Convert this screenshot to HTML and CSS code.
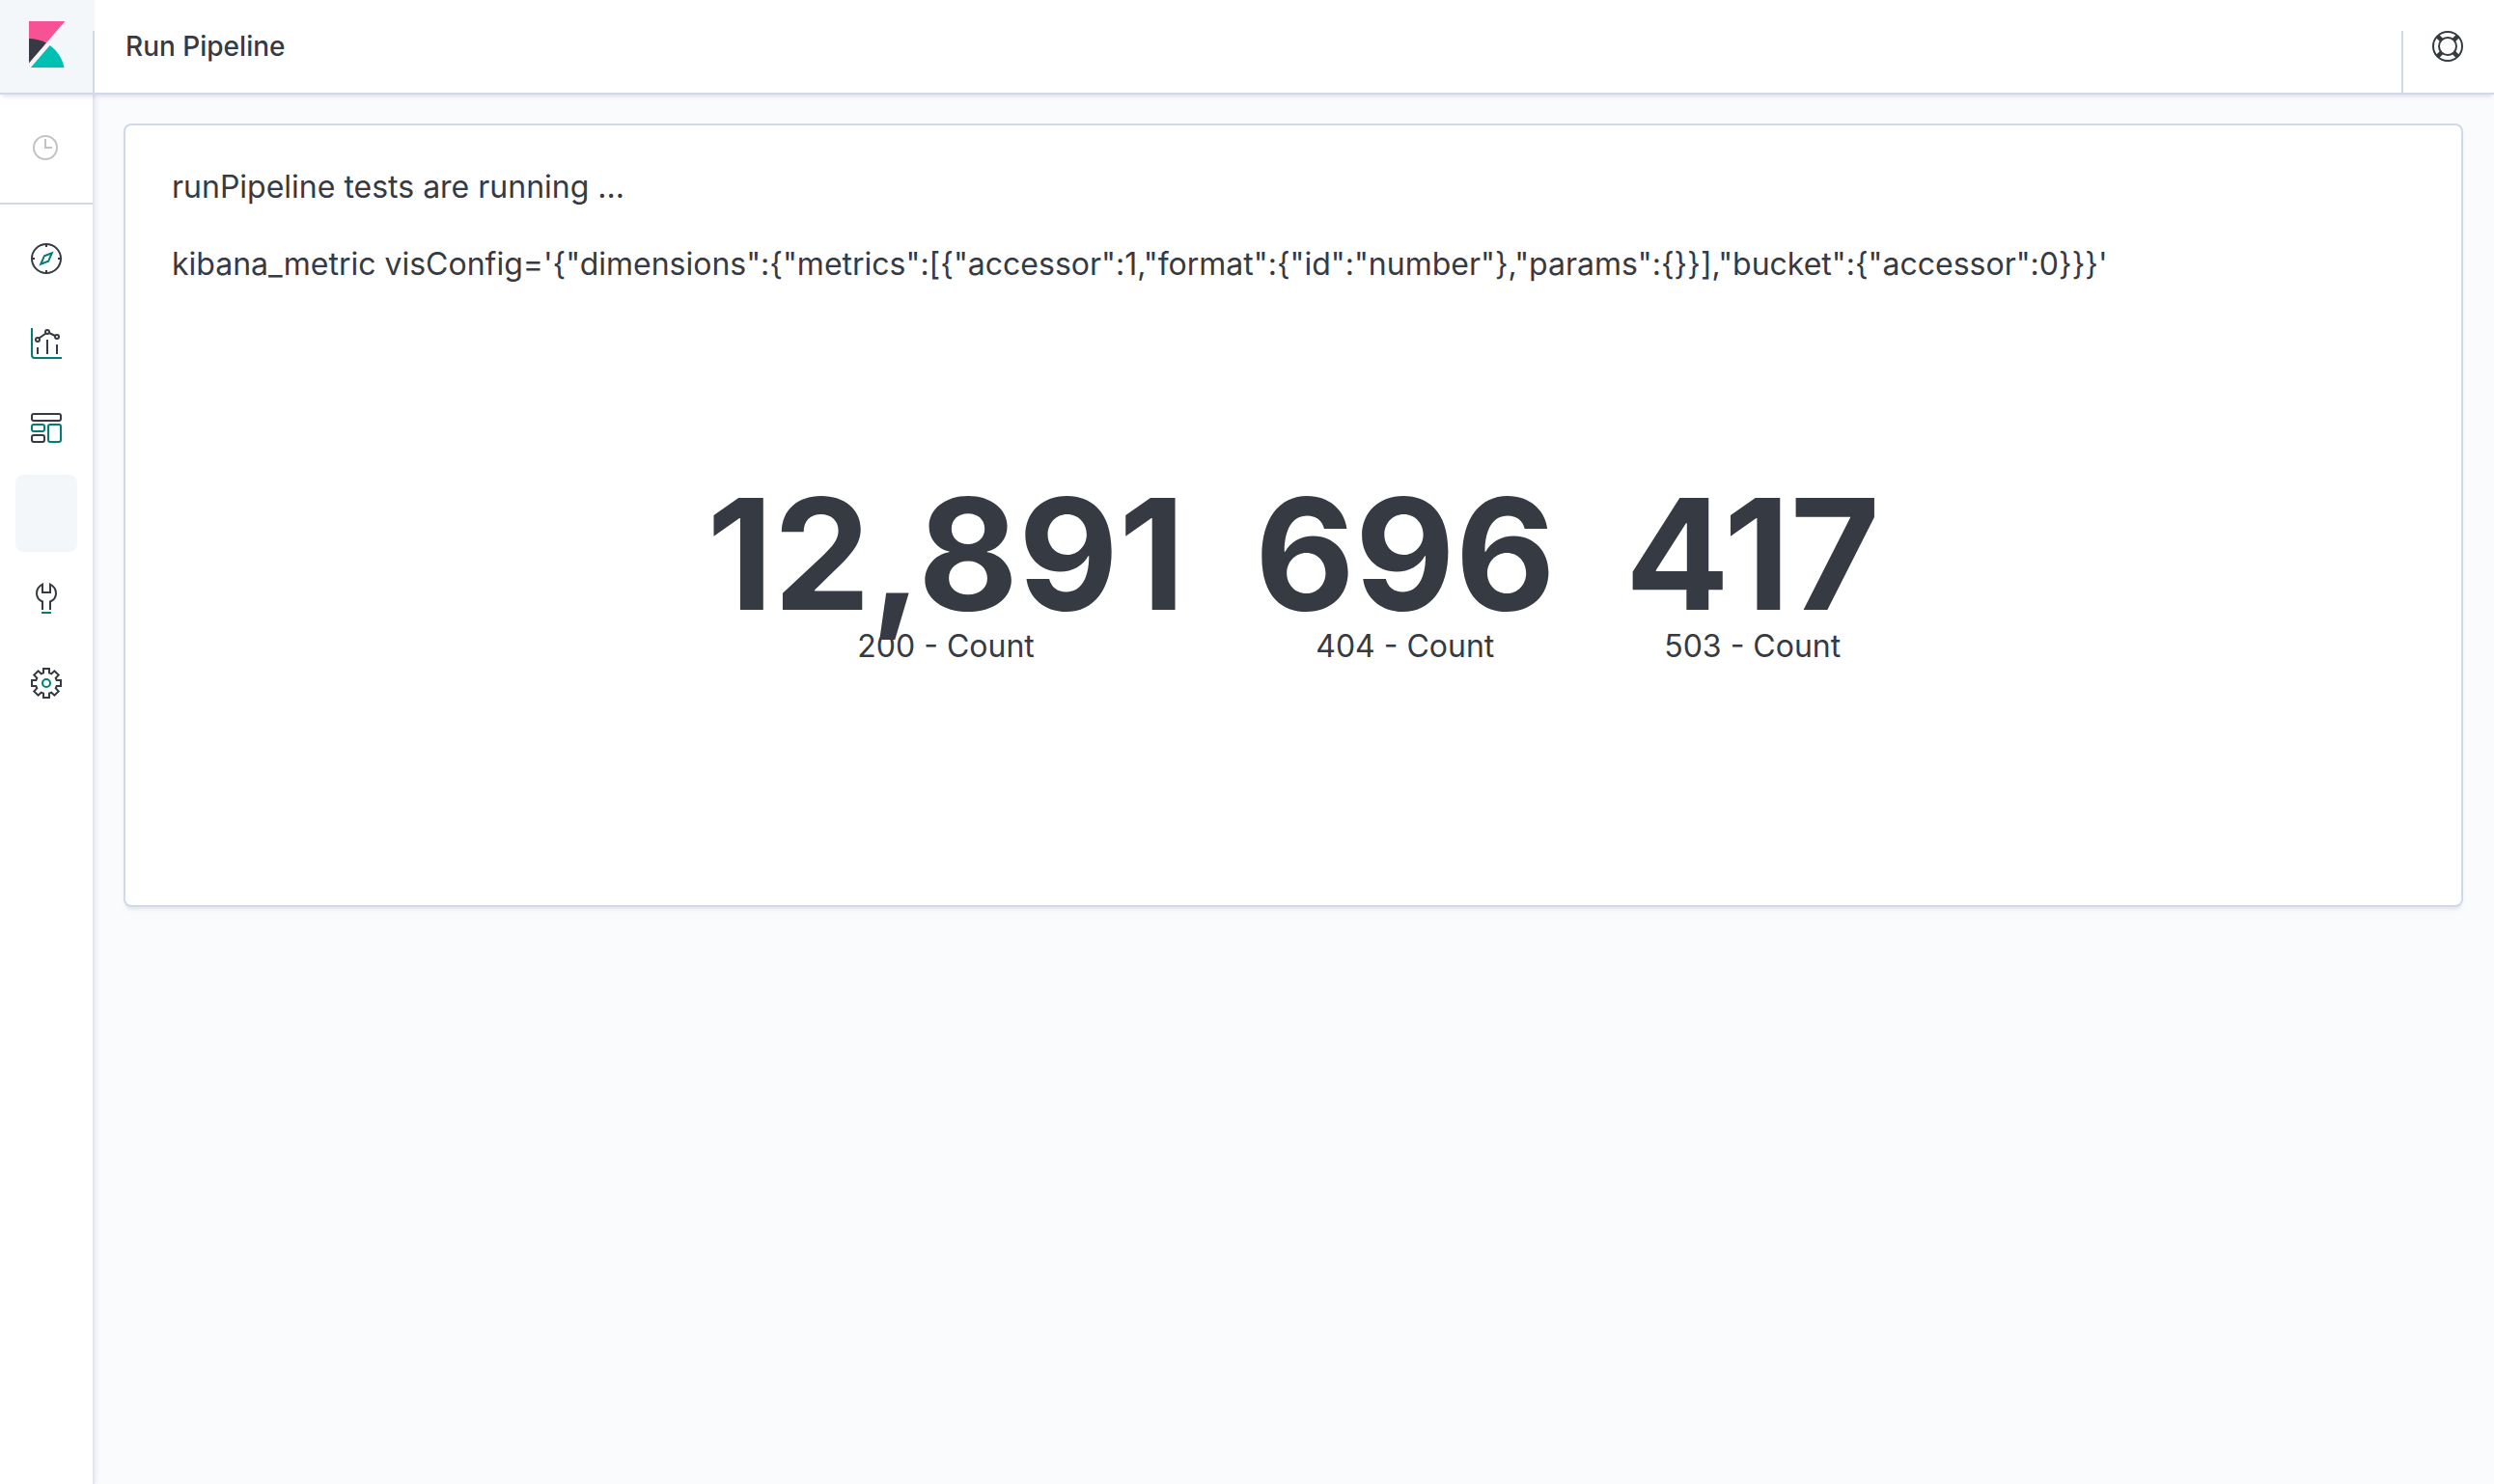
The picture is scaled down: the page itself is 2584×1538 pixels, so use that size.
FILE: index.html
```html
<!DOCTYPE html>
<html lang="en">
<head>
<meta charset="utf-8">
<title>Run Pipeline - Kibana</title>
<link rel="stylesheet" href="styles.css">
</head>
<body>
<div class="app">
  <header class="header">
    <a class="header-logo" href="#" aria-label="Kibana home">
      <svg width="48" height="48" viewBox="0 0 32 32" aria-hidden="true">
        <path fill="#f85296" d="M4 0v28.789L28.935.017z"/>
        <path fill="#363a43" d="M4 12v16.789l11.906-13.738A24.721 24.721 0 0 0 4 12"/>
        <path fill="#00bfb3" d="M18.479 16.664 6.268 30.754l-1.073 1.237h23.191c-1.252-6.292-4.883-11.719-9.908-15.327"/>
      </svg>
    </a>
    <span class="header-rule"></span>
    <h1 class="header-title">Run Pipeline</h1>
    <span class="header-rule header-rule-end"></span>
    <button class="header-help" type="button" aria-label="Help menu">
      <svg width="32" height="32" viewBox="0 0 32 32" fill="none" stroke="#363a43" stroke-width="2" aria-hidden="true">
        <circle cx="16" cy="16" r="15"/>
        <circle cx="16" cy="16" r="9"/>
        <path stroke-width="4.5" d="m5.700 5.700 4 4M26.300 5.700l-4 4M5.700 26.300l4-4M26.300 26.300l-4-4"/>
      </svg>
    </button>
  </header>

  <nav class="sidebar" aria-label="Main">
    <div class="recent">
      <button class="recent-button" type="button" aria-label="Recently viewed" disabled>
        <svg width="26" height="26" viewBox="0 0 26 26" fill="none" stroke="#c2c3c6" stroke-width="2" aria-hidden="true">
          <circle cx="13" cy="13" r="12"/>
          <path d="M13 4v9h7"/>
        </svg>
      </button>
    </div>
    <ul class="nav-list">
      <li><a class="nav-link" href="#" aria-label="Discover">
        <svg width="32" height="32" viewBox="0 0 32 32" fill="none" stroke="#363a43" stroke-width="2" aria-hidden="true">
          <circle cx="16" cy="16" r="15"/>
          <path d="M16 1v3M16 28v3M1 16h3M28 16h3"/>
          <path stroke="#017d73" d="m21.800 10.200-7.900 3-3.700 8.600 7.900-3z"/>
        </svg></a></li>
      <li><a class="nav-link" href="#" aria-label="Visualize">
        <svg width="32" height="32" viewBox="0 0 32 32" fill="none" stroke="#363a43" stroke-width="2" aria-hidden="true">
          <path stroke="#017d73" d="M1 0v28a3 3 0 0 0 3 3h28"/>
          <path d="M7 20v7M17 12v15M27 17v10M8.500 10.500l7-5M19 5l6 3"/>
          <circle cx="7" cy="12" r="2"/><circle cx="17" cy="4" r="2"/><circle cx="27" cy="9" r="2"/>
        </svg></a></li>
      <li><a class="nav-link" href="#" aria-label="Dashboard">
        <svg width="32" height="32" viewBox="0 0 32 32" fill="none" stroke="#363a43" stroke-width="2" aria-hidden="true">
          <rect x="1" y="1" width="30" height="7" rx="2"/>
          <rect x="1" y="23" width="13" height="7" rx="2"/>
          <rect stroke="#017d73" x="1" y="12" width="13" height="7" rx="2"/>
          <rect stroke="#017d73" x="18" y="12" width="13" height="18" rx="2"/>
        </svg></a></li>
      <li><a class="nav-link nav-link-active" href="#" aria-label="Run Pipeline" aria-current="page"></a></li>
      <li><a class="nav-link" href="#" aria-label="Dev Tools">
        <svg width="32" height="32" viewBox="0 0 32 32" fill="none" stroke="#363a43" stroke-width="2" aria-hidden="true">
          <path d="M12 28v-8.500C8.500 18 6 15 6 11c0-4 2.500-7.500 6-9.300V10h8V1.700c3.500 1.800 6 5.300 6 9.300s-2.500 7-6 8.500V28"/>
          <path stroke="#017d73" d="M11 31h10"/>
        </svg></a></li>
      <li><a class="nav-link" href="#" aria-label="Management">
        <svg width="32" height="32" viewBox="0 0 32 32" fill="none" stroke="#363a43" stroke-width="2" aria-hidden="true">
          <path d="M13 1h6v4.300l2.300 1 3.100-3 4.300 4.300-3 3.100 1 2.300H31v6h-4.300l-1 2.300 3 3.100-4.300 4.300-3.100-3-2.300 1V31h-6v-4.300l-2.300-1-3.100 3-4.300-4.300 3-3.100-1-2.300H1v-6h4.300l1-2.300-3-3.100 4.300-4.300 3.100 3 2.300-1z"/>
          <circle stroke="#017d73" cx="16" cy="16" r="4"/>
        </svg></a></li>
    </ul>
  </nav>

  <main class="content">
    <section class="panel">
      <p class="line">runPipeline tests are running ...</p>
      <p class="line">kibana_metric visConfig='{"dimensions":{"metrics":[{"accessor":1,"format":{"id":"number"},"params":{}}],"bucket":{"accessor":0}}}'</p>
      <div class="metrics">
        <div class="metric"><div class="metric-value">12,891</div><div>200 - Count</div></div>
        <div class="metric"><div class="metric-value">696</div><div>404 - Count</div></div>
        <div class="metric"><div class="metric-value">417</div><div>503 - Count</div></div>
      </div>
    </section>
  </main>
</div>
</body>
</html>
```
FILE: styles.css
```css
*,
*::before,
*::after {
  box-sizing: border-box;
}

body {
  margin: 0;
  background: #fafbfd;
  color: #363a43;
  font: 400 32px/32px Inter, "Liberation Sans", sans-serif;
  font-optical-sizing: none;
}

.app {
  display: grid;
  grid-template-columns: 98px minmax(0, 1fr);
  grid-template-rows: auto 1fr;
  min-height: 100vh;
}

/* Top bar */
.header {
  grid-column: 1 / -1;
  position: relative;
  z-index: 1;
  display: flex;
  height: 98px;
  background: #fff;
  border-bottom: 2px solid #d0dae6;
  box-shadow: 0 4px 4px -2px rgba(152, 162, 179, 0.3);
}

.header-logo {
  display: flex;
  align-items: center;
  justify-content: center;
  width: 96px;
  padding-bottom: 4px;
  background: #f3f7fa;
}

.header-rule {
  width: 2px;
  background: linear-gradient(#f3f7fa 32px, #d0dae6 32px);
}

.header-rule-end {
  margin-left: auto;
  background: linear-gradient(#fff 32px, #d0dae6 32px);
}

.header-title {
  margin: 0;
  padding-left: 32px;
  font-size: 28px;
  font-weight: 500;
  line-height: 96px;
}

.header-help {
  width: 94px;
  padding: 0 2px 0 0;
  border: 0;
  background: none;
}

.header-help svg {
  display: block;
  margin: 0 auto;
}

/* Side navigation */
.sidebar {
  background: #fff;
  border-right: 2px solid #e3e6ef;
  box-shadow: 2px 0 4px rgba(152, 162, 179, 0.15);
}

.recent {
  display: flex;
  height: 114px;
  border-bottom: 2px solid #d0dae6;
}

.recent-button {
  flex: 1;
  padding: 0 2px 2px 0;
  border: 0;
  background: none;
}

.recent-button svg {
  display: block;
  margin: 0 auto;
}

.nav-list {
  display: grid;
  gap: 8px;
  margin: 0;
  padding: 16px;
  list-style: none;
}

.nav-link {
  display: flex;
  align-items: center;
  justify-content: center;
  height: 80px;
  border-radius: 8px;
}

.nav-link-active {
  background: #f3f7fa;
}

/* Page body */
.content {
  padding: 30px 32px 32px 30px;
}

.panel {
  padding: 48px;
  background: #fff;
  border: 2px solid #d0dae6;
  border-radius: 8px;
  box-shadow: 0 4px 4px -2px rgba(152, 162, 179, 0.3);
}

.line {
  margin: 0 0 48px;
  font-feature-settings: "calt" 0;
}

.line + .line {
  margin-bottom: 0;
}

.metrics {
  display: flex;
  align-items: center;
  justify-content: center;
  min-height: 600px;
}

.metric {
  padding: 0 36px;
  text-align: center;
}

.metric-value {
  font-size: 160px;
  font-weight: 700;
  line-height: 160px;
}
```
